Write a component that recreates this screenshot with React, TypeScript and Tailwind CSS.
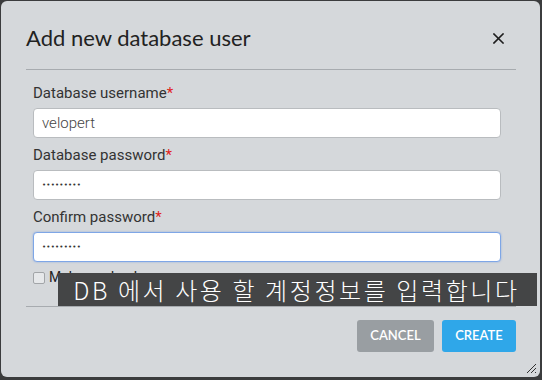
const labelCls = "block text-[15px] leading-[20px] text-[#333] font-['Roboto',sans-serif]";

function Field({
  label,
  value,
  secret,
  focused,
  first,
}: {
  label: string;
  value: string;
  secret?: boolean;
  focused?: boolean;
  first?: boolean;
}) {
  return (
    <div className={first ? "mt-[13px]" : "mt-[7px]"}>
      <label className={labelCls}>
        {label}
        <span className="text-[#e0231b]">*</span>
      </label>
      <div
        className={
          "mt-[5px] h-[30px] rounded-[4px] bg-white flex items-center px-[8px] border " +
          (focused
            ? "border-[#7ea6e6] shadow-[0_0_2px_rgba(90,140,230,0.6)]"
            : "border-[#b9bcbf]")
        }
      >
        {secret ? (
          <span className="text-[7px] tracking-[0.2px] text-[#333] font-['DejaVu_Sans',sans-serif]">
            {value}
          </span>
        ) : (
          <span className="text-[15px] text-[#444] font-['Roboto',sans-serif] font-light">
            {value}
          </span>
        )}
      </div>
    </div>
  );
}

export default function App() {
  return (
    <div className="w-[542px] h-[380px] bg-[#3b3c3d] pt-px pl-px overflow-hidden">
      <div className="relative w-[539px] h-[376px] rounded-[6px] bg-[#d5d8db] pl-[25px] pr-[24px] flex flex-col">
        <div className="h-[69px] flex items-center justify-between pt-[4px] pr-[12px] border-b border-[#a7abaf]">
          <h2 className="text-[22px] text-[#222] font-['Lato',sans-serif] font-normal">
            Add new database user
          </h2>
          <svg width="11" height="11" viewBox="0 0 11 11" className="mt-[3px]">
            <path d="M1 1L10 10M10 1L1 10" stroke="#1e1e1e" strokeWidth="1.6" strokeLinecap="square" />
          </svg>
        </div>

        <div className="pl-[7px] pr-[15px]">
          <Field first label="Database username" value="velopert" />
          <Field label="Database password" value="•••••••••" secret />
          <Field label="Confirm password" value="•••••••••" secret focused />
          <div className="mt-[5px] flex items-center gap-[4px]">
            <span className="w-[12px] h-[12px] rounded-[2px] border border-[#a2a5a8] bg-[#e6e8ea]" />
            <span className="text-[14px] text-[#222] font-['Roboto',sans-serif]">Make read-only</span>
          </div>
        </div>

        <div className="mt-auto border-t border-[#a7abaf] pt-[13px] pb-[25px] flex justify-end gap-[8px]">
          <button className="w-[77px] h-[32px] rounded-[3px] bg-[#999ea2] text-white text-[13px] font-semibold font-['Lato',sans-serif]">
            CANCEL
          </button>
          <button className="w-[74px] h-[32px] rounded-[3px] bg-[#2fa7e9] text-white text-[13px] font-semibold font-['Lato',sans-serif]">
            CREATE
          </button>
        </div>

        <div className="absolute left-[57px] top-[272px] w-[479px] h-[33px] bg-[#444546] flex items-center justify-center pr-[2px]">
          <span className="text-white text-[24px] leading-none tracking-[2.6px] font-['Noto_Sans_CJK_KR',sans-serif] font-light">
            DB 에서 사용 할 계정정보를 입력합니다
          </span>
        </div>

        <svg width="12" height="12" viewBox="0 0 12 12" className="absolute right-[3px] bottom-[3px]">
          <path d="M11 2L2 11M11 6L6 11M11 10L10 11" stroke="#333" strokeWidth="1" />
        </svg>
      </div>
    </div>
  );
}
